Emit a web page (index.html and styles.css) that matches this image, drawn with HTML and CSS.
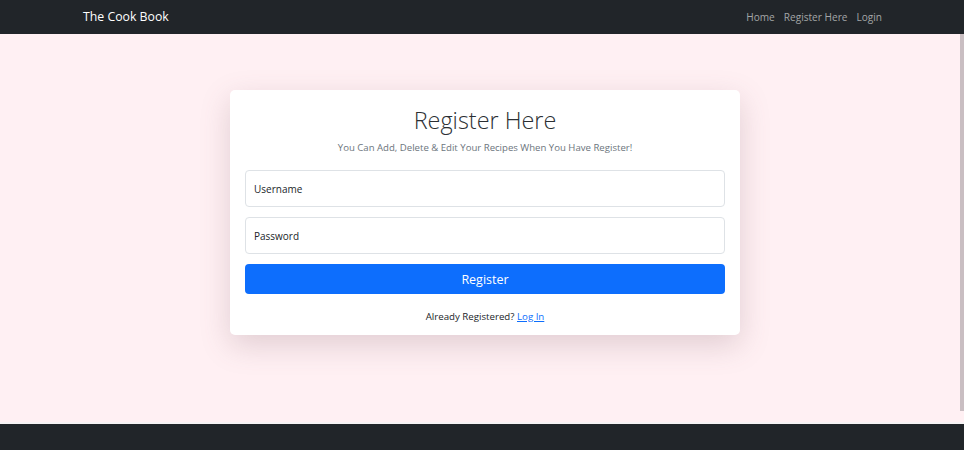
FILE: index.html
```html
<!DOCTYPE html>
<html lang="en">
<head>
<meta charset="utf-8">
<title>Register - The Cook Book</title>
<link rel="stylesheet" href="styles.css">
</head>
<body>
<nav class="navbar">
  <div class="nav-inner">
    <a class="brand" href="#">The Cook Book</a>
    <ul class="nav-links">
      <li><a href="#">Home</a></li>
      <li><a href="#">Register Here</a></li>
      <li><a href="#">Login</a></li>
    </ul>
  </div>
</nav>
<div class="main">
  <div class="content">
    <div class="card">
      <h1 class="title">Register Here</h1>
      <p class="subtitle">You Can Add, Delete &amp; Edit Your Recipes When You Have Register!</p>
      <form class="form">
        <input class="field" type="text" placeholder="Username">
        <input class="field" type="password" placeholder="Password">
        <button class="btn" type="button">Register</button>
      </form>
      <p class="login-line">Already Registered? <a href="#">Log In</a></p>
    </div>
  </div>
  <div class="scrollbar"></div>
</div>
<footer class="footer"></footer>
</body>
</html>
```
FILE: styles.css
```css
* { box-sizing: border-box; }
html, body { margin: 0; padding: 0; }
body {
  height: 450px;
  display: flex;
  flex-direction: column;
  font-family: "Open Sans", "Liberation Sans", sans-serif;
  color: #212529;
  background: #fff0f3;
  overflow: hidden;
}
.navbar {
  height: 34px;
  flex: 0 0 34px;
  background: #212529;
}
.nav-inner {
  height: 100%;
  display: flex;
  align-items: center;
  justify-content: space-between;
  padding: 0 82px 0 83px;
}
.brand {
  color: #fff;
  text-decoration: none;
  font-size: 12.3px;
  margin-top: -1px;
}
.nav-links {
  list-style: none;
  display: flex;
  align-items: center;
  gap: 9px;
  margin: 0;
  padding: 0;
}
.nav-links li { line-height: 14px; }
.nav-links a {
  display: block;
  color: #a3a5a7;
  text-decoration: none;
  font-size: 10.1px;
  line-height: 14px;
  margin-top: -1px;
}
.main {
  flex: 1;
  display: flex;
  border-bottom: 2px solid #f6f3f4;
}
.content {
  flex: 1;
  display: flex;
  justify-content: center;
  align-items: flex-start;
  padding-top: 56px;
  padding-left: 10px;
}
.scrollbar {
  width: 4px;
  height: 377px;
  background: #c9bec2;
}
.card {
  width: 510px;
  background: #fff;
  border-radius: 5px;
  box-shadow: 0 10px 30px rgba(120, 80, 95, 0.22);
  padding: 12px 15px 11px;
  text-align: center;
}
.title {
  margin: 0;
  font-size: 23.4px;
  font-weight: 300;
  line-height: 36px;
  color: #2b2f33;
}
.subtitle {
  margin: 3px 0 15px;
  font-size: 9.6px;
  line-height: 14px;
  color: #6c757d;
}
.form {
  display: flex;
  flex-direction: column;
  gap: 10px;
}
.field {
  height: 37px;
  width: 100%;
  border: 1px solid #dee2e6;
  border-radius: 4px;
  padding: 0 8px;
  font-family: inherit;
  font-size: 10px;
  color: #212529;
  background: #fff;
}
.field::placeholder { color: #212529; opacity: 1; }
.btn {
  height: 30px;
  width: 100%;
  border: none;
  border-radius: 4px;
  background: #0d6efd;
  color: #fff;
  font-family: inherit;
  font-size: 12.5px;
}
.login-line {
  margin: 16px 0 0;
  font-size: 9.7px;
  line-height: 14px;
  color: #212529;
}
.login-line a { color: #0d6efd; }
.footer {
  height: 26px;
  flex: 0 0 26px;
  background: #212529;
}
```
